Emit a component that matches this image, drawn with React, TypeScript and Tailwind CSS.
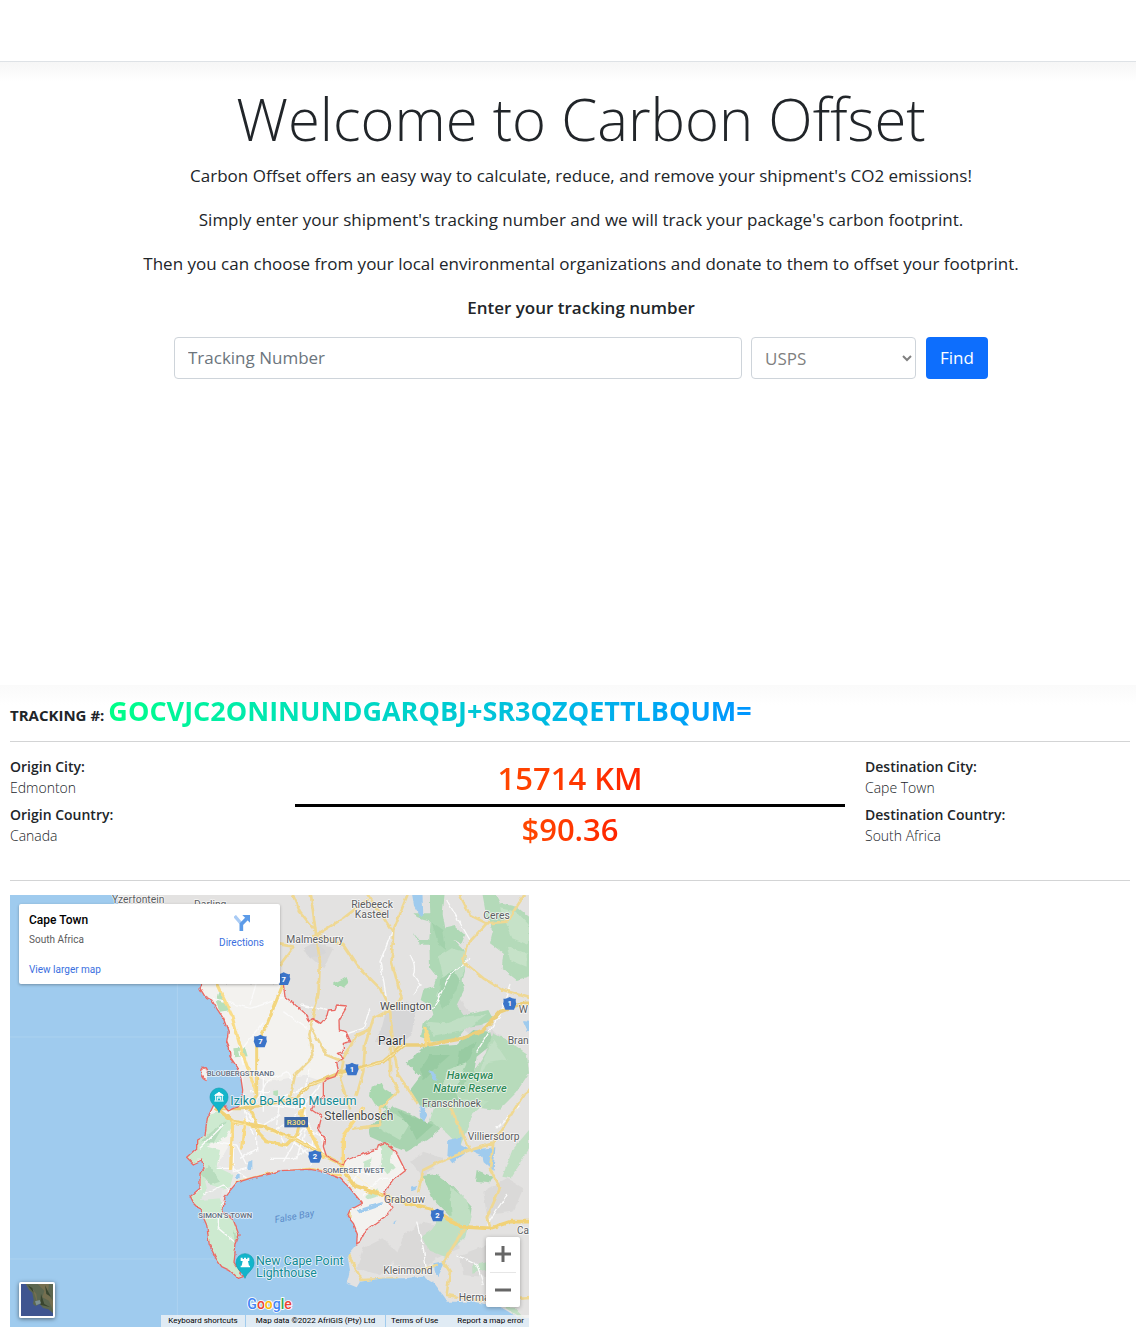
import React from "react";

type LabelProps = {
  x: number;
  y: number;
  children: string;
  size?: number;
  fill?: string;
  anchor?: "start" | "middle" | "end";
  weight?: number;
  italic?: boolean;
};

function Label({ x, y, children, size = 31, fill = "#5b5d61", anchor = "start", weight = 400, italic = false }: LabelProps) {
  return (
    <text
      x={x}
      y={y}
      fontSize={size}
      fill={fill}
      textAnchor={anchor}
      fontWeight={weight}
      fontStyle={italic ? "italic" : "normal"}
      stroke="#fff"
      strokeOpacity={0.75}
      strokeWidth={5}
      strokeLinejoin="round"
      paintOrder="stroke"
    >
      {children}
    </text>
  );
}

function Shield({ x, y, n }: { x: number; y: number; n: string }) {
  return (
    <g transform={`translate(${x} ${y})`}>
      <path d="M0-20 Q10-13 19-15 Q17-7 20 0 L13 18 H-13 L-20 0 Q-17-7-19-15 Q-10-13 0-20Z" fill="#3a74c9" />
      <text y="8" textAnchor="middle" fontSize="23" fontWeight="700" fill="#fff">{n}</text>
    </g>
  );
}

function Pin({ x, y, kind }: { x: number; y: number; kind: "museum" | "tower" }) {
  return (
    <g transform={`translate(${x} ${y})`}>
      <path d="M0 47 C-5 29-27 22-27 0 A27 27 0 0 1 27 0 C27 22 5 29 0 47Z" fill="#12b5cb" stroke="#129eaf" strokeWidth="2" />
      {kind === "museum" ? (
        <g fill="none" stroke="#fff" strokeWidth="3">
          <path d="M-13-5 L0-14 13-5Z" fill="#fff" />
          <path d="M-10-4V11M-5 10V0H5V10M0 0V6M10-4V11M-14 12H14" />
        </g>
      ) : (
        <path d="M-13-15h6v4h4v-4h6v4h4v-4h6v10h-4l3 14h3v5h-28v-5h3l3-14h-6Z" fill="#fff" />
      )}
    </g>
  );
}

function CapeMap() {
  return (
    <svg viewBox="0 0 1557 1296" className="block h-auto w-full" fontFamily="Roboto, sans-serif" role="img" aria-label="Map of Cape Town">
      <defs>
        <filter id="rough" x="0" y="0" width="100%" height="100%" filterUnits="userSpaceOnUse">
          <feTurbulence type="fractalNoise" baseFrequency="0.045" numOctaves="3" seed="4" result="n" />
          <feDisplacementMap in="SourceGraphic" in2="n" scale="11" xChannelSelector="R" yChannelSelector="G" />
        </filter>
        <clipPath id="landClip">
          <path d="M315 -20 L330 60 575 267 570 280 585 305 605 315 620 340 640 370 655 410 650 440 658 460 660 485 680 515 692 545 698 585 695 615 685 635 670 640 655 648 640 630 610 632 592 670 585 720 560 735 560 760 530 787 550 807 575 795 582 820 570 835 570 880 540 905 550 925 570 945 590 990 598 1050 618 1090 635 1115 660 1127 685 1150 700 1145 685 1125 672 1105 678 1045 687 1020 670 975 638 950 645 905 680 863 730 847 780 837 810 827 900 823 940 830 990 850 1020 880 1057 925 1020 945 1012 963 1030 985 1042 1015 1040 1047 1012 1080 1020 1125 1010 1165 1040 1177 1050 1160 1120 1150 1180 1150 1240 1145 1270 1165 1300 1205 1310 1220 1390 1220 1470 1235 1520 1265 1580 1275 V-20Z" />
        </clipPath>
      </defs>
      <rect width="1557" height="1296" fill="#9fcbee" />
      <path d="M502 0V1296M0 426H700M0 1092H640" stroke="#b4d6f1" strokeWidth="2" fill="none" />
      <path d="M320 0H1557V40H330Z" fill="#e3e2e1" />
      <path d="M1520 0H1557V1240H1520Z" fill="#e3e2e1" />

      <g filter="url(#rough)">
        <g clipPath="url(#landClip)">
          <rect y="-20" width="1580" height="1330" fill="#e3e2e1" />
          <g fill="#dad9d8">
            <path d="M1180 1020l60-40 80 20 30 60-70 30-50 40-80-20zM1060 1060l60-30 50 50-60 60-70-20zM1350 1080l80-30 60 40-20 60-110-10zM1080 700l60-60 50 80-50 40zM1340 300l60 80 70 40-30 60-70-70-60-50zM1420 890l70-40 50 30-30 70-80 10zM1200 800l40-30 60 20-60 60zM880 170l30-30 60 20-30 60z" />
          </g>
          <path d="M575 267 570 280 585 305 605 315 620 340 640 370 655 410 650 440 658 460 660 485 680 515 692 545 698 585 695 615 685 635 670 640 655 648 640 630 610 632 592 670 585 720 560 735 560 760 530 787 550 807 575 795 582 820 570 835 570 880 540 905 550 925 570 945 590 990 598 1050 618 1090 635 1115 660 1127 685 1150 700 1145 685 1125 672 1105 678 1045 687 1020 670 975 638 950 645 905 680 863 730 847 780 837 810 827 900 823 940 830 990 850 1020 880 1057 925 1020 945 1012 963 1030 985 1042 1015 1040 1047 1050 1040 1068 1005 1090 990 1125 965 1150 935 1130 915 1122 895 1150 855 1186 827 1160 775 1125 743 1105 750 1100 765 1050 780 1010 795 1000 810 950 785 940 755 945 730 925 705 935 665 905 645 912 622 940 605 940 565 950 553 975 545 985 525 980 505 1000 490 982 475 1000 470 1000 445 1022 440 1008 410 988 405 987 375 1012 333 980 330 975 343 955 345 950 365 932 385 905 370 895 380 885 355 850 325 825 305 820 267Z" fill="#f3f2ef" />
          <g fill="#e9e8e7">
            <path d="M700 535 L780 560 880 540 940 560 935 600 905 640 930 670 930 720 940 780 980 800 1010 850 1040 890 1010 900 980 850 900 823 810 827 690 860 650 900 640 950 590 900 610 830 670 730 650 660 700 630Z" />
            <path d="M1130 340l60-20 25 30-10 70-50 40-60-20 20-40z" fill="#d6d6d7" />
            <path d="M880 160l40-20 30 35-50 15z" fill="#d6d6d7" />
          </g>

          <g transform="translate(750 -15)">
            <path fill="#aed8b5" d="M510 0 L555 0 548 70 556 115 585 108 615 135 605 160 580 150 610 180 620 225 608 270 612 300 590 345 610 375 640 370 685 360 700 390 660 405 620 410 590 450 520 455 480 440 488 400 520 375 515 350 482 330 490 300 520 290 530 260 510 235 508 150 512 90 510 50Z" />
            <path fill="#c0dfc4" d="M535 200l40-25 40 10 5 40-20 50-70 45 20-60zM500 395l60 5 50-20 70-8-60 45-100 20z" />
            <path fill="#a2d1ab" d="M515 95l35 25 8 60-25-20zM540 270l40-30 20 30-20 50-30 40-15-30z" />
            <path fill="#aed8b5" d="M457 70h60l-5 22-40-10zM458 125l20 25 34 0v14h-30z" />
            <path fill="#b4dab9" d="M665 0 L700 0 720 40 770 50 820 90 V255 L770 270 725 235 730 190 690 160 700 120 680 80Z" />
            <path fill="#c6e2c8" d="M720 55l50 10 37 40v60l-50-20zM740 170l60 20v40l-50-20z" />
            <path fill="#a4d2ac" d="M490 470 L590 465 640 420 690 425 700 460 650 500 640 560 590 600 600 660 480 650 450 600 480 560 440 520Z" />
            <path fill="#b7dbbb" d="M700 430l40 20 60 40 7 60-40 60-50 50-100-10-30-40 50-60 40-60z" />
            <path fill="#98cba2" d="M510 495l60 0-40 35-40 40-10-30zM600 480l50-25-20 50-40 40z" />
            <path fill="#c3e0c6" d="M700 450l40 60-60 10-30 70 20-80zM560 540l60-20-30 70-40 10z" />
            <path fill="#a9d8af" d="M220 280l20-10 20-12 5 20-15 15-10-5-20 0zM335 590l30-12 10 20 30 20-30 20 10 25-40-20-15-25z" />
          </g>
          <g transform="translate(750 615)">
            <path fill="#a9d4b0" d="M325 85 L370 40 400 20 450 40 500 70 530 50 540 90 500 120 440 155 400 140 370 128 330 110Z" />
            <path fill="#bddfc1" d="M350 80l50-40 50 30-30 50zM530 0H690L640 40 600 140 560 100 510 60Z" />
            <path fill="#9acca3" d="M410 30l50 20 60 25-50 45-20-40z" />
            <path fill="#a9d5af" d="M487 228 L530 222 580 260 635 320 630 370 570 350 520 300ZM650 210l50 20-10 20-45-5z" />
            <path fill="#c0dfc3" d="M570 260l50 40 15 50-20 60-60 60-50-20-20-40 30-20 20-30 40-10zM807 90l-50 60-30 80 25 5 55-90zM640 495l60-12v20l-60 15zM730 620l30 0 47 50z" />
            <path fill="#c6e5c9" d="M352 132l30-4 20 15-10 40 15 20-25 20-20-25 5-50zM310 185l25-10-5 25-22 5zM320 285l30-20 0 25-30 10z" />
          </g>
          <g transform="translate(-30 615)">
            <path fill="#cdead0" d="M625 45 L660 35 700 70 680 110 620 140 660 150 650 200 700 225 690 260 655 275 670 335 700 360 720 410 705 490 735 540 690 520 640 480 620 430 610 370 570 310 565 290 605 270 600 220 615 200 600 175 575 200 555 170 590 150 590 115 615 105Z" />
            <path fill="#b7dcbd" d="M630 100l50-40-40 70-40-5zM600 220l30-25 30 50-30 10zM700 390l15 20-10 20z" />
            <path fill="#e3e5e3" d="M612 230l20 25 35 10-5 30-60 5 20-30z" />
          </g>
          <g fill="#b7dfba">
            <path d="M625 290l20 25 15 30-30 5-12-30zM670 460l35-3 8 27-40 3zM790 588l14-2v18l-14-3z" />
          </g>
          <g fill="#9fcbee">
            <path d="M1205 -10h32l3 72-10 0-18-30zM1538 375l40 5v28l-25 0zM1255 525l15 5 15 25-18-3zM1228 640l10-10 14 30-10 20-12-10zM1315 735l40-10-3 25 27 15-52 40-15-20zM1378 765l78-8-5 70-30-25-5-20zM1202 875l18-6-3 15-12 5zM1040 945l80-25-15 15-35 12-22 8zM715 800l12-5v27h-15zM675 838l14-2v14l-14-2zM1145 985l15-10-8 12zM1270 1105l38-8-25 50-8-20z" />
          </g>

          <g fill="none" stroke="#fafafa" strokeWidth="4">
            <path d="M610 310 L720 340 820 310M720 330 L740 260M820 350L890 400M700 510L690 470 760 380M1185 15L1110 200 1130 310M1200 180q20 30 10 60l20 30-20 30M1270 340l50-100 60-50M1310 15l70 120M870 330l100 20M1400 470l70-110 30-90M1000 420l60-20 20-60M870 640l30-120M740 620l30-60 60-30 20 30M760 650V530M800 690l10-80 70-30M830 760l-30-60 60-30M860 790l30-100-10-80M900 810l10-90-30-70M780 790l70 0 60-40M740 770l0-80-40-50M700 640l30 80M690 790l50-30M620 740l60 10 30 60M640 690l-70 70M620 820l50 0 40 30M580 900l60-30 30 30-40 30M625 960v40l60 50M860 690l90 40M850 720l90 50M850 740l60 50M820 800l60-100M930 570l-80 100M1010 880l40-50 30 10M1060 900l50-50 40 0M1220 980l20 80 10 70M1490 900l-60 90M1460 700l70-70M1340 1080l60 30 20 60" />
            <path d="M720 590h60M700 670l60 20 50-30M670 740l0 90 40-10M920 600l-70 40-80-10" />
          </g>
          <g fill="none" stroke="#e9c96c" strokeWidth="9" strokeLinejoin="round" strokeLinecap="round">
            <path d="M900 -20L917 110 930 200 925 300 905 380 898 420 910 480 895 500 855 540 840 610M905 400L950 480 1000 500 990 550 1020 640M840 -20L870 50 917 110M1070 15L1000 70 910 125M917 120L1000 150 1040 210 1110 280 1140 345 1150 460 1165 540 1200 590 1222 625M1200 -20L1150 105 1145 200 1175 310 1140 345M1060 -20L1145 105M1140 345L1090 370 1065 450 1060 530 1040 600M1340 -20L1380 60 1430 85 1490 80 1550 -10M1430 85L1370 150 1360 200 1420 250 1480 285 1580 315M1000 490L1040 420 1075 405M1140 460V540L1165 590M1165 590L1110 640 1110 690 1030 700M1020 880L1015 1080 1055 1155 1160 1150M1280 1110L1220 1130M1365 1000L1300 1100 1320 1130 1310 1200 1400 1215 1500 1210 1580 1205M1380 765L1290 800 1240 825 1225 890M1450 745L1440 820 1470 880 1430 970 1440 1000M1450 745L1540 600 1580 570M1320 630L1340 680 1380 765M1380 765L1450 745M780 255L810 210 850 155 760 140" stroke="#efd893" strokeWidth="8" />
            <path d="M620 267L665 360 690 450 740 600" stroke="#f9dd8a" />
            <path d="M820 265L770 390 740 450 740 600 720 635 750 720 770 740 830 750 860 720 880 640" stroke="#f3d67e" />
            <path d="M620 640L700 640 860 610 900 570 1000 530 1120 500 1180 450 1250 450 1360 430 1420 405 1470 350 1540 325 1580 325" stroke="#eccf7c" strokeWidth="11" />
            <path d="M620 640L670 680 760 695 860 735 940 780 990 805 1030 870 1115 900 1190 925 1260 940 1350 995 1440 1000 1500 980 1580 980" stroke="#f1d278" strokeWidth="11" />
            <path d="M668 680L662 820M705 675L695 760M870 650L900 710 940 790M1250 450L1245 400 1260 440M1000 810L1000 720 1060 640" stroke="#f8d982" strokeWidth="10" />
            <path d="M680 862L780 836 900 822 990 840" stroke="#f8d982" />
          </g>
          <g fill="none" stroke="#fff3c4" strokeWidth="2">
            <path d="M640 640L860 610 900 570 1120 500 1180 450M670 680L860 735 990 805 1115 900" />
          </g>
        </g>
        <path d="M575 267 570 280 585 305 605 315 620 340 640 370 655 410 650 440 658 460 660 485 680 515 692 545 698 585 695 615 685 635 670 640 655 648 640 630 610 632 592 670 585 720 560 735 560 760 530 787 550 807 575 795 582 820 570 835 570 880 540 905 550 925 570 945 590 990 598 1050 618 1090 635 1115 660 1127 685 1150 700 1145 685 1125 672 1105 678 1045 687 1020 670 975 638 950 645 905 680 863 730 847 780 837 810 827 900 823 940 830 990 850 1020 880 1057 925 1020 945 1012 963 1030 985 1042 1015 1040 1047 1050 1040 1068 1005 1090 990 1125 965 1150 935 1130 915 1122 895 1150 855 1186 827 1160 775 1125 743 1105 750 1100 765 1050 780 1010 795 1000 810 950 785 940 755 945 730 925 705 935 665 905 645 912 622 940 605 940 565 950 553 975 545 985 525 980 505 1000 490 982 475 1000 470 1000 445 1022 440 1008 410 988 405 987 375 1012 333 980 330 975 343 955 345 950 365 932 385 905 370 895 380 885 355 850 325 825 305 820 267" fill="none" stroke="#ea6a64" strokeWidth="4" strokeLinejoin="round" />
        <path d="M592 535c2-18-8-24-16-16c-8 10-4 32 14 38" fill="#f3f2ef" stroke="#ea6a64" strokeWidth="4" />
      </g>

      <Label x={306} y={25}>Yzerfontein</Label>
      <Label x={552} y={38}>Darling</Label>
      <Label x={1086} y={38} anchor="middle">Riebeeck</Label>
      <Label x={1086} y={69} anchor="middle">Kasteel</Label>
      <Label x={1420} y={71}>Ceres</Label>
      <Label x={829} y={145}>Malmesbury</Label>
      <Label x={1110} y={344} size={33} fill="#4a4c50">Wellington</Label>
      <Label x={1104} y={450} size={36} fill="#303235">Paarl</Label>
      <Label x={1526} y={355}>W</Label>
      <Label x={1493} y={448}>Bran</Label>
      <Label x={1380} y={553} size={33} fill="#2f8a57" anchor="middle" weight={500} italic>Haweqwa</Label>
      <Label x={1380} y={590} size={33} fill="#2f8a57" anchor="middle" weight={500} italic>Nature Reserve</Label>
      <Label x={1236} y={635}>Franschhoek</Label>
      <Label x={590} y={542} size={23} weight={500} fill="#5f6b7c">BLOUBERGSTRAND</Label>
      <Label x={661} y={629} size={37} fill="#128a94">Iziko Bo-Kaap Museum</Label>
      <Label x={943} y={674} size={36} fill="#44464a">Stellenbosch</Label>
      <Label x={1373} y={734}>Villiersdorp</Label>
      <Label x={938} y={834} size={23} weight={500} fill="#5f6b7c">SOMERSET WEST</Label>
      <Label x={1122} y={925}>Grabouw</Label>
      <Label x={565} y={970} size={23} weight={500} fill="#5f6b7c">SIMON'S TOWN</Label>
      <text transform="translate(796 984) rotate(-10)" fontSize="29" fontStyle="italic" fill="#5b8cc9">False Bay</text>
      <Label x={738} y={1109} size={37} fill="#128a94">New Cape Point</Label>
      <Label x={738} y={1146} size={37} fill="#128a94">Lighthouse</Label>
      <Label x={1120} y={1136}>Kleinmond</Label>
      <Label x={1346} y={1219}>Herma</Label>
      <Label x={1521} y={1016} size={30}>Ca</Label>

      <Shield x={821} y={252} n="7" />
      <Shield x={751} y={439} n="7" />
      <Shield x={1499} y={326} n="1" />
      <Shield x={1026} y={523} n="1" />
      <Shield x={915} y={785} n="2" />
      <Shield x={1282} y={961} n="2" />
      <rect x="823" y="666" width="71" height="31" fill="#3a66a6" />
      <text x="858" y="690" textAnchor="middle" fontSize="24" fontWeight="500" fill="#fde27c">R300</text>
      <Pin x={627} y={606} kind="museum" />
      <Pin x={705} y={1103} kind="tower" />

      <g fontSize="42" fontWeight="500" stroke="#fff" strokeWidth="5" paintOrder="stroke">
        <text x="712" y="1243">
          <tspan fill="#4285f4">G</tspan><tspan fill="#ea4335">o</tspan><tspan fill="#fbbc04">o</tspan><tspan fill="#4285f4">g</tspan><tspan fill="#34a853">l</tspan><tspan fill="#ea4335">e</tspan>
        </text>
      </g>
    </svg>
  );
}

function MapEmbed() {
  return (
    <div className="relative w-[519px] max-w-full overflow-hidden font-[Roboto,sans-serif]">
      <CapeMap />
      <div className="absolute left-[9px] top-[9px] flex h-20 w-[261px] justify-between rounded-xs bg-white pl-[10px] pr-4 shadow-[0_1px_3px_rgba(0,0,0,0.3)]">
        <div className="flex flex-col">
          <div className="mt-2 text-[12px] leading-4 font-medium text-black">Cape Town</div>
          <div className="mt-1 text-[10px] leading-4 text-[#5b5b5b]">South Africa</div>
          <a href="#map" className="mt-[14px] text-[10px] leading-4 text-[#3a6fe0]">View larger map</a>
        </div>
        <a href="#directions" className="flex flex-col items-center pt-[11px] text-[10px] leading-4 text-[#3a6fe0]">
          <svg viewBox="0 0 48 48" className="h-4 w-4" aria-hidden="true">
            <path d="M2 3 L20 24" stroke="#a9cbf5" strokeWidth="10" fill="none" />
            <path d="M22 48V28L38 11" stroke="#5c9be8" strokeWidth="11" fill="none" />
            <path d="M25 0H48V23Z" fill="#5c9be8" />
          </svg>
          <span className="mt-1">Directions</span>
        </a>
      </div>
      <button aria-label="Show satellite imagery" className="absolute bottom-[9px] left-[9px] h-9 w-9 overflow-hidden rounded-xs border-2 border-white shadow-[0_1px_4px_rgba(0,0,0,0.5)]">
        <svg viewBox="0 0 96 96" className="block h-full w-full" aria-hidden="true">
          <rect width="96" height="96" fill="#3f5590" />
          <path d="M14 0L24 18 34 26 38 48 36 60 44 66 56 60 66 72 82 76 96 88V0Z" fill="#5c6750" />
          <path d="M50 0l20 20-6 20 20 10 12 30V50L80 30 84 0zM30 10l16 20 4 30-10-30z" fill="#756f50" />
          <path d="M60 30l10 30 18 10-30-8zM20 4l14 8 4 14zM72 4l10 20 8 14-14-8z" fill="#39452f" />
          <path d="M42 52l14-4 4 10-14 6z" fill="#7d9092" />
        </svg>
      </button>
      <div className="absolute bottom-[20px] right-[9px] flex h-[70px] w-[34px] flex-col items-center rounded-xs bg-white shadow-[0_1px_4px_rgba(0,0,0,0.3)]">
        <button aria-label="Zoom in" className="flex w-full flex-1 items-center justify-center">
          <svg viewBox="0 0 16 16" className="h-4 w-4" aria-hidden="true"><path d="M8 0V16M0 8H16" stroke="#666" strokeWidth="3" /></svg>
        </button>
        <div className="h-px w-[26px] bg-[#e6e6e6]" />
        <button aria-label="Zoom out" className="flex w-full flex-1 items-center justify-center">
          <svg viewBox="0 0 16 16" className="h-4 w-4" aria-hidden="true"><path d="M0 8H16" stroke="#666" strokeWidth="3" /></svg>
        </button>
      </div>
      <div className="absolute bottom-0 right-0 flex h-3 gap-px whitespace-nowrap text-[8px] leading-3 text-black">
        <button className="w-[84px] bg-[#f5f5f5]/75">Keyboard shortcuts</button>
        <span className="w-[139px] bg-[#f5f5f5]/75 text-center">Map data ©2022 AfriGIS (Pty) Ltd</span>
        <span className="flex w-[143px] justify-between bg-[#f5f5f5]/75 px-[5px]">
          <a href="#terms">Terms of Use</a>
          <a href="#report">Report a map error</a>
        </span>
      </div>
    </div>
  );
}

function Place({ kind, city, country }: { kind: string; city: string; country: string }) {
  return (
    <dl className="flex flex-col text-[14px] leading-[21px]">
      <dt className="font-semibold">{kind} City:</dt>
      <dd className="mb-[6px] font-light">{city}</dd>
      <dt className="font-semibold">{kind} Country:</dt>
      <dd className="font-light">{country}</dd>
    </dl>
  );
}

export default function App() {
  return (
    <div className="bg-white font-['Open_Sans','Noto_Sans',sans-serif] text-[#212529]">
      <header className="h-[62px] border-b border-[#dee2e6] bg-white" />
      <main>
        <section className="flex h-[623px] flex-col items-center bg-linear-to-b from-[#f6f6f6] to-white to-[20px] pl-[26px] pt-5 text-center text-[17px] leading-7">
          <h1 className="text-[58px] leading-[74px] font-light">Welcome to Carbon Offset</h1>
          <p className="mt-[6px]">Carbon Offset offers an easy way to calculate, reduce, and remove your shipment's CO2 emissions!</p>
          <p className="mt-4">Simply enter your shipment's tracking number and we will track your package's carbon footprint.</p>
          <p className="mt-4">Then you can choose from your local environmental organizations and donate to them to offset your footprint.</p>
          <label htmlFor="tracking" className="mt-4 font-semibold">Enter your tracking number</label>
          <form className="mt-[15px] flex h-[42px] w-full max-w-[814px] text-left" onSubmit={(e: React.FormEvent) => e.preventDefault()}>
            <input
              id="tracking"
              placeholder="Tracking Number"
              className="min-w-0 flex-1 rounded border border-[#ced4da] bg-white px-[13px] placeholder:text-[#6c757d]"
            />
            <select aria-label="Carrier" className="ml-[9px] w-[165px] rounded border border-[#ced4da] bg-white px-[9px] text-[#808080]">
              <option>USPS</option>
            </select>
            <button className="ml-[10px] w-[62px] rounded bg-[#0d6efd] text-white">Find</button>
          </form>
        </section>
        <section className="bg-linear-to-b from-[#fafafa] to-white to-[20px] pr-[6px] pb-1 pl-[10px]">
          <div className="flex h-14 items-baseline gap-1 pt-2">
            <h2 className="text-[15px] font-bold">TRACKING #:</h2>
            <span className="bg-linear-to-r from-[#00ff87] to-[#0095ff] bg-clip-text text-[27px] leading-9 font-bold text-transparent">
              GOCVJC2ONINUNDGARQBJ+SR3QZQETTLBQUM=
            </span>
          </div>
          <hr className="border-[#d3d4d5]" />
          <div className="grid h-[138px] grid-cols-[265fr_550fr_265fr] gap-5 pt-[14px]">
            <Place kind="Origin" city="Edmonton" country="Canada" />
            <div className="flex flex-col items-center text-[31px] leading-[44px] font-semibold">
              <span className="mb-1 bg-linear-to-r from-[#ff4800] to-[#ff2200] bg-clip-text text-transparent">15714 KM</span>
              <hr className="w-full border-t-3 border-black" />
              <span className="bg-linear-to-r from-[#ff4800] to-[#ff2200] bg-clip-text text-transparent">$90.36</span>
            </div>
            <Place kind="Destination" city="Cape Town" country="South Africa" />
          </div>
          <hr className="mb-[14px] border-[#d3d4d5]" />
          <MapEmbed />
        </section>
      </main>
    </div>
  );
}
